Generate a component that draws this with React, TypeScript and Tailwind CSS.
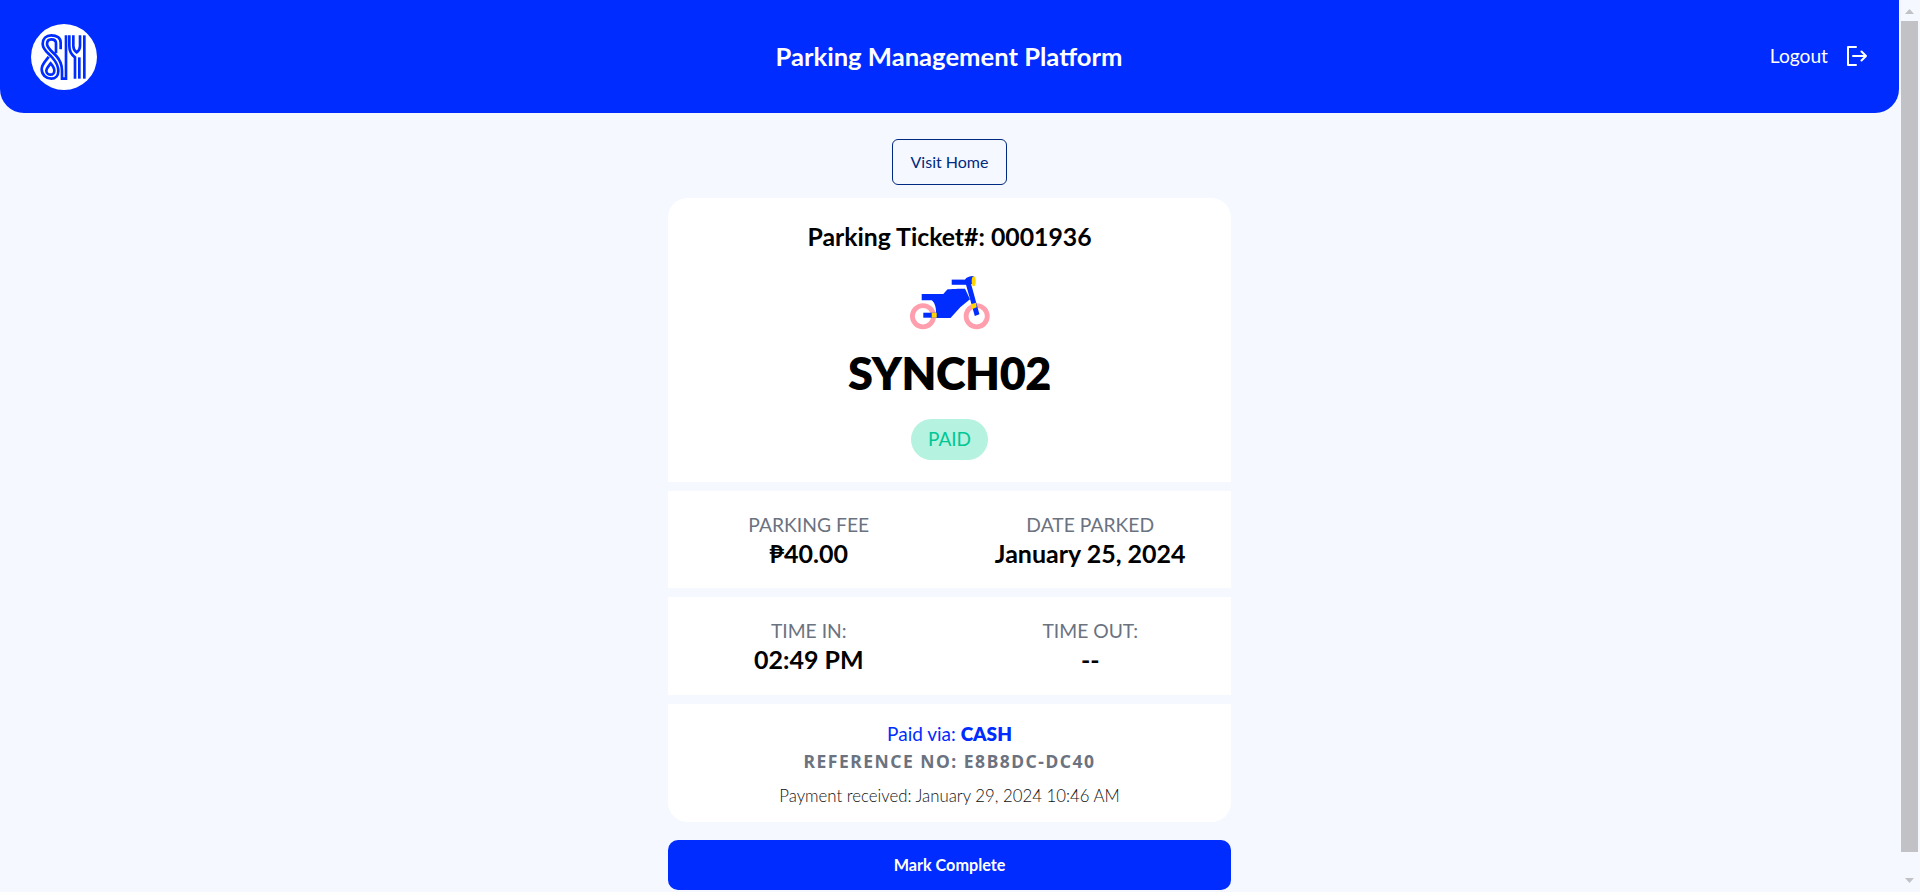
import React from "react";

const Logo = () => (
  <svg width="66" height="66" viewBox="15 12 198 198" className="shrink-0">
    <circle cx="114" cy="111" r="99" fill="#ffffff" />
    <g fill="none" stroke="#002cff" strokeWidth="8">
      <path d="M104 88 V68 C104 53 92 46 76 46 C60 46 50 57 50 72 C50 90 68 100 80 114 C92 128 97 142 97 153 C97 167 88 176 76 176 C60 176 47 164 47 148 C47 132 60 122 68 110" />
      <path d="M90 100 V70 C90 60 85 58 76 58 C69 58 63 62 63 72 C63 84 78 94 91 108 C102 120 108 134 108 152 V176 H120 V46" />
      <path d="M74 130 C67 139 61 145 61 152 C61 160 68 164 74 164 C80 164 85 159 85 152 C85 144 80 137 74 130 Z" />
      <path d="M130 46 V78 C130 94 136 104 147 112 V176" />
      <path d="M142 46 V78 C142 88 147 94 152 97 C157 94 162 88 162 78 V46" />
      <path d="M175 46 V176" />
      <path d="M160 112 V176" />
    </g>
  </svg>
);

const Bike = () => (
  <svg width="80" height="54" viewBox="0 0 80 54">
    <circle cx="13" cy="40.3" r="10.6" fill="none" stroke="#ff9eac" strokeWidth="4.8" />
    <circle cx="66.7" cy="40.3" r="10.6" fill="none" stroke="#ff9eac" strokeWidth="4.8" />
    <path d="M13.3 36.7 H26 V41.7 H13.3 Z" fill="#002cff" />
    <path d="M11.7 18 H33.3 L37.3 13.6 C40 13 50 12.8 55 12.8 L60 23.3 L50.5 31 L40.5 42 H26 V35.7 C26 30 24 26 21.7 24.3 H11.7 Z" fill="#002cff" />
    <path d="M41.7 3.6 H60 V8.8 H41.7 Z" fill="#002cff" />
    <path d="M55 4 C56 1 60 0 64 0 V8 H58 Z" fill="#002cff" />
    <path d="M55.6 7.3 H60.9 L69.4 38.3 L64.8 40 Z" fill="#002cff" />
    <ellipse cx="63.7" cy="5.3" rx="2" ry="5" fill="#ffd400" />
    <path d="M21.7 36.7 H26.7 V41.7 H21.7 Z" fill="#ffd400" />
    <path d="M60.7 28.3 L66 26.7 L66.7 31.3 L61.7 33.3 Z" fill="#ffd400" />
  </svg>
);

const Stat = ({ label, value }: { label: string; value: string }) => (
  <div className="flex flex-col items-center pt-[2px]">
    <span className="text-[19.3px] leading-[24px] text-[#6b7280]">{label}</span>
    <span className="text-[25px] leading-[32px] font-bold text-black">{value}</span>
  </div>
);

const Arrow = ({ up }: { up: boolean }) => (
  <svg width="9" height="5" viewBox="0 0 9 5" fill="#c1c1c6">
    <path d={up ? "M4.5 0 L9 5 H0 Z" : "M0 0 H9 L4.5 5 Z"} />
  </svg>
);

export default function App() {
  return (
    <div className="flex h-[892px] overflow-hidden bg-[#f5f9ff] font-['Lato','Liberation_Sans',sans-serif]">
      <div className="min-w-0 flex-1">
        <header className="grid h-[113px] grid-cols-[1fr_auto_1fr] items-center rounded-b-[24px] bg-[#002cff] pl-[31px] pr-[32px]">
          <Logo />
          <h1 className="text-[25.6px] font-bold text-white">Parking Management Platform</h1>
          <div className="flex items-center gap-[19px] justify-self-end text-white">
            <span className="text-[19.2px]">Logout</span>
            <svg width="20" height="20" viewBox="0 0 20 20" fill="none" stroke="#ffffff" strokeWidth="2" strokeLinecap="round" strokeLinejoin="round">
              <path d="M9 1 H1 V19 H9" />
              <path d="M6 10 H19 M14.5 5.5 L19 10 L14.5 14.5" />
            </svg>
          </div>
        </header>

        <main className="flex flex-col items-center pt-[26px]">
          <button className="h-[46px] w-[115px] rounded-[6px] border border-[#002a80] text-[16px] text-[#002a80]">Visit Home</button>

          <section className="mt-[13px] flex w-[563px] flex-col gap-[9px]">
            <div className="flex h-[284px] flex-col items-center rounded-t-[20px] bg-white pt-[23px]">
              <div className="text-[24.8px] font-bold leading-[32px] text-black">Parking Ticket#: 0001936</div>
              <div className="mt-[23px] h-[54px]"><Bike /></div>
              <div className="mt-[19px] text-[45px] font-extrabold leading-[48px] tracking-[-0.4px] text-black">SYNCH02</div>
              <div className="mt-[22px] flex h-[41px] w-[77px] items-center justify-center rounded-full bg-[#b5f2df] text-[19px] text-[#00c795]">PAID</div>
            </div>

            <div className="grid h-[97px] grid-cols-2 items-center bg-white">
              <Stat label="PARKING FEE" value="₱40.00" />
              <Stat label="DATE PARKED" value="January 25, 2024" />
            </div>

            <div className="grid h-[98px] grid-cols-2 items-center bg-white">
              <Stat label="TIME IN:" value="02:49 PM" />
              <Stat label="TIME OUT:" value="--" />
            </div>

            <div className="flex h-[118px] flex-col items-center rounded-b-[20px] bg-white pt-[16px]">
              <div className="text-[19px] leading-[28px] text-[#002cff]">Paid via: <span className="font-extrabold">CASH</span></div>
              <div className="pt-[1px] font-['Noto_Sans',sans-serif] text-[17.5px] font-bold leading-[24px] tracking-[1.5px] text-[#6b7280]">REFERENCE NO: E8B8DC-DC40</div>
              <div className="mt-[11px] text-[16.8px] font-light leading-[24px] text-[#111111]">Payment received: January 29, 2024 10:46 AM</div>
            </div>
          </section>

          <button className="mt-[18px] h-[50px] w-[563px] rounded-[10px] bg-[#002cff] text-[16.2px] font-bold text-white">Mark Complete</button>
        </main>
      </div>

      <aside className="flex w-[21px] shrink-0 flex-col items-center">
        <div className="flex h-[21px] items-start pt-[9px]"><Arrow up /></div>
        <div className="h-[831px] w-[17px] bg-[#c1c1c6]" />
        <div className="pt-[26px]"><Arrow up={false} /></div>
      </aside>
    </div>
  );
}
